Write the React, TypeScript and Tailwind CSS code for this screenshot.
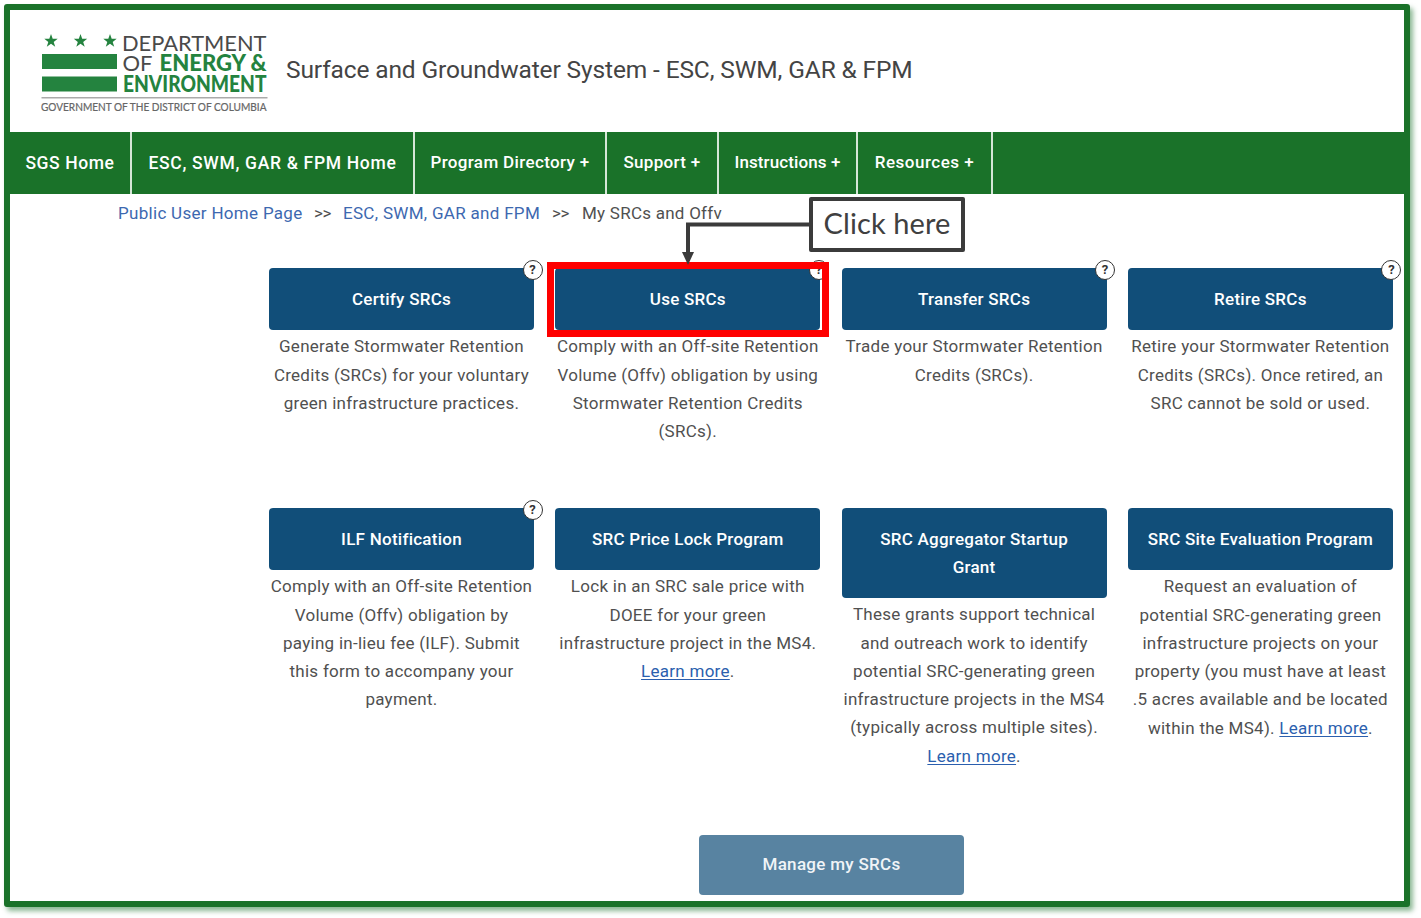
import type { ReactNode } from "react";

const navItems = [
  { label: "SGS Home", style: "w-[120px] text-[17.5px] tracking-[0.6px]" },
  { label: "ESC, SWM, GAR & FPM Home", style: "w-[281px] text-[17.5px] tracking-[0.68px]" },
  { label: "Program Directory +", style: "w-[190px] text-[17px] tracking-[0.35px]" },
  { label: "Support +", style: "w-[110px] text-[17px] tracking-[0.3px]" },
  { label: "Instructions +", style: "w-[137px] text-[17px] tracking-[0.1px]" },
  { label: "Resources +", style: "w-[133px] text-[17px] tracking-[0.5px]" },
];

type Card = { title: string[]; lines: ReactNode[]; help?: boolean; marked?: boolean };

const LearnMore = () => (
  <a href="#" className="text-[#2b5fae] underline underline-offset-2">
    Learn more
  </a>
);

const topCards: Card[] = [
  {
    title: ["Certify SRCs"],
    help: true,
    lines: ["Generate Stormwater Retention", "Credits (SRCs) for your voluntary", "green infrastructure practices."],
  },
  {
    title: ["Use SRCs"],
    help: true,
    marked: true,
    lines: [
      "Comply with an Off-site Retention",
      "Volume (Offv) obligation by using",
      "Stormwater Retention Credits",
      "(SRCs).",
    ],
  },
  { title: ["Transfer SRCs"], help: true, lines: ["Trade your Stormwater Retention", "Credits (SRCs)."] },
  {
    title: ["Retire SRCs"],
    help: true,
    lines: ["Retire your Stormwater Retention", "Credits (SRCs). Once retired, an", "SRC cannot be sold or used."],
  },
];

const bottomCards: Card[] = [
  {
    title: ["ILF Notification"],
    help: true,
    lines: [
      "Comply with an Off-site Retention",
      "Volume (Offv) obligation by",
      "paying in-lieu fee (ILF). Submit",
      "this form to accompany your",
      "payment.",
    ],
  },
  {
    title: ["SRC Price Lock Program"],
    lines: [
      "Lock in an SRC sale price with",
      "DOEE for your green",
      "infrastructure project in the MS4.",
      <><LearnMore />.</>,
    ],
  },
  {
    title: ["SRC Aggregator Startup", "Grant"],
    lines: [
      "These grants support technical",
      "and outreach work to identify",
      "potential SRC-generating green",
      "infrastructure projects in the MS4",
      "(typically across multiple sites).",
      <><LearnMore />.</>,
    ],
  },
  {
    title: ["SRC Site Evaluation Program"],
    lines: [
      "Request an evaluation of",
      "potential SRC-generating green",
      "infrastructure projects on your",
      "property (you must have at least",
      ".5 acres available and be located",
      <>within the MS4). <LearnMore />.</>,
    ],
  },
];

function Logo() {
  const star = "0,-7 1.7,-2.2 6.7,-2.2 2.7,0.9 4.2,5.8 0,2.8 -4.2,5.8 -2.7,0.9 -6.7,-2.2 -1.7,-2.2";
  return (
    <svg width="228" height="82" viewBox="0 0 228 82" className="shrink-0 overflow-visible font-[Lato,sans-serif]">
      <g fill="#24833f">
        {[10, 39.5, 69].map((x) => (
          <polygon key={x} points={star} transform={`translate(${x} 8)`} />
        ))}
        <rect x="1" y="21" width="75" height="15" />
        <rect x="1" y="43.500" width="75" height="15" />
      </g>
      <g fontSize="22">
        <text x="81" y="18" fill="#4a4a4a" textLength="144.500" lengthAdjust="spacingAndGlyphs">DEPARTMENT</text>
        <text x="81.500" y="38" fill="#4a4a4a" textLength="30" lengthAdjust="spacingAndGlyphs">OF</text>
        <text x="118.500" y="38" fill="#24833f" fontWeight="900" textLength="107" lengthAdjust="spacingAndGlyphs">ENERGY &amp;</text>
        <text x="82" y="59" fill="#24833f" fontWeight="900" textLength="143.500" lengthAdjust="spacingAndGlyphs">ENVIRONMENT</text>
      </g>
      <rect x="0.500" y="64" width="226" height="1.5" fill="#aaa" />
      <text x="0" y="77.500" fontSize="10.5" fill="#666" stroke="#666" strokeWidth="0.2" textLength="225.500" lengthAdjust="spacingAndGlyphs">
        GOVERNMENT OF THE DISTRICT OF COLUMBIA
      </text>
    </svg>
  );
}

function ActionCard({ card }: { card: Card }) {
  return (
    <section className="text-center">
      <div className="relative">
        <button className="block w-full rounded bg-[#114e79] pt-[16.500px] pb-[17.500px] text-[17px] leading-[28px] font-medium tracking-[0.25px] text-white">
          {card.title.map((t) => (
            <span key={t} className="block whitespace-nowrap">{t}</span>
          ))}
        </button>
        {card.help && (
          <span className="absolute -top-[8px] -right-[8.500px] flex size-5 items-center justify-center rounded-full border-[1.5px] border-[#333] bg-white text-[13px] font-bold text-[#333]">
            ?
          </span>
        )}
        {card.marked && <div className="absolute -top-[6px] -right-[8.500px] -bottom-[7px] -left-[8px] border-[7.500px] border-[#fe0000]" />}
      </div>
      <p className="-mx-3 pt-[2.300px] text-[17px] leading-[28.3px] tracking-[0.27px]">
        {card.lines.map((line, i) => (
          <span key={i} className="block whitespace-nowrap">{line}</span>
        ))}
      </p>
    </section>
  );
}

export default function App() {
  return (
    <div className="relative h-[918px] w-[1421px] overflow-hidden bg-white pt-1 pl-1 font-[Roboto,sans-serif] text-[#505050]">
      <div className="flex h-[903px] w-[1406px] flex-col rounded-[3px] border-[6px] border-[#1a7229] bg-white shadow-[3px_4px_5px_rgba(26,114,41,0.5)]">
        <header className="flex h-[122px] shrink-0 items-start pt-[23px] pl-[31px]">
          <Logo />
          <h1 className="mt-[20px] ml-[17px] text-[24.5px] leading-[34px] tracking-[-0.13px] whitespace-nowrap text-[#444]">
            Surface and Groundwater System - ESC, SWM, GAR &amp; FPM
          </h1>
        </header>
        <nav className="flex h-[62px] shrink-0 bg-[#1a7229] font-medium text-white">
          {navItems.map((n) => (
            <a
              key={n.label}
              href="#"
              className={`${n.style} box-content flex shrink-0 items-center justify-center border-r-2 border-[#d5e6d7] whitespace-nowrap`}
            >
              {n.label}
            </a>
          ))}
        </nav>
        <div className="flex h-[38px] shrink-0 items-center pt-px pl-[108px] text-[17px] tracking-[0.3px] whitespace-nowrap">
          <a href="#" className="w-[196px] text-[#3d68b0]">Public User Home Page</a>
          <span className="w-[29px] text-[17px] tracking-tight">&gt;&gt;</span>
          <a href="#" className="w-[209px] text-[#3d68b0]">ESC, SWM, GAR and FPM</a>
          <span className="w-[30px] text-[17px] tracking-tight">&gt;&gt;</span>
          <span className="tracking-[0.25px]">My SRCs and Offv</span>
        </div>
        <main className="flex flex-col pt-[36px] pl-[259px]">
          <div className="grid h-[240px] grid-cols-[repeat(4,265px)] gap-x-[21.300px]">
            {topCards.map((c) => <ActionCard key={c.title[0]} card={c} />)}
          </div>
          <div className="grid h-[326.500px] grid-cols-[repeat(4,265px)] gap-x-[21.300px]">
            {bottomCards.map((c) => <ActionCard key={c.title[0]} card={c} />)}
          </div>
          <button className="ml-[430px] h-[60.500px] w-[265px] rounded bg-[#5883a1] pb-px text-[17px] font-medium tracking-[0.3px] text-[#f0f4f7]">
            Manage my SRCs
          </button>
        </main>
      </div>
      <svg className="absolute top-[220px] left-[680px]" width="132" height="46" viewBox="0 0 132 46">
        <path d="M131 4.500H8V34" fill="none" stroke="#3b3b3b" strokeWidth="4" />
        <path d="M2 32h12L8 45z" fill="#3b3b3b" />
      </svg>
      <div className="absolute top-[197px] left-[809px] flex h-[55px] w-[156px] items-center justify-center rounded-[2px] border-4 border-[#3b3b3b] bg-white pb-[3px] font-[Lato,sans-serif] text-[29px] tracking-[0.1px] whitespace-nowrap text-[#404040]">
        Click here
      </div>
    </div>
  );
}
